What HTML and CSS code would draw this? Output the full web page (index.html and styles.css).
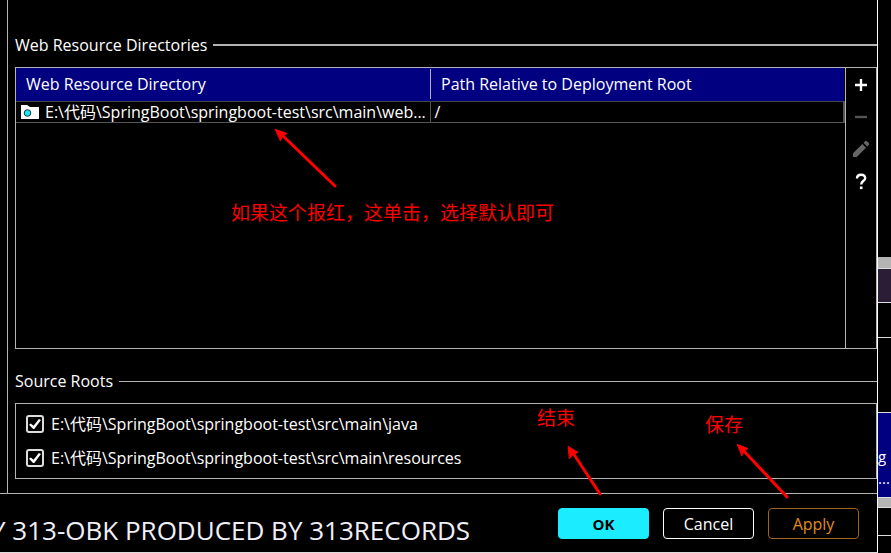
FILE: index.html
```html
<!DOCTYPE html>
<html lang="en">
<head>
<meta charset="utf-8">
<title>Web Resource Directories</title>
<link rel="stylesheet" href="styles.css">
</head>
<body>
<div class="screen">
  <div class="dialog">
    <main class="content">
      <h2 class="heading heading-strong">Web Resource Directories</h2>
      <section class="resources">
        <table class="table">
          <thead>
            <tr><th><span>Web Resource Directory</span></th><th><span>Path Relative to Deployment Root</span></th></tr>
          </thead>
          <tbody>
            <tr>
              <td>
                <div class="path">
                  <svg class="folder" width="18" height="14" viewBox="0 0 18 14" aria-hidden="true"><path d="M0 0h6l3 2h9v12H0z" fill="#fff"/><circle cx="6.500" cy="8" r="3.300" fill="#1ce6f5" stroke="#1b3338" stroke-width="1"/></svg>
                  <span>E:\代码\SpringBoot\springboot-test\src\main\web...</span>
                </div>
              </td>
              <td>/</td>
            </tr>
          </tbody>
        </table>
        <div class="tools">
          <button class="tool" type="button" aria-label="Add"><svg width="20" height="20" viewBox="0 0 20 20"><path d="M4 10h12M10 4v12" stroke="#fff" stroke-width="2.4"/></svg></button>
          <button class="tool" type="button" aria-label="Remove"><svg width="20" height="20" viewBox="0 0 20 20"><path d="M4 10h12" stroke="#555" stroke-width="2.4"/></svg></button>
          <button class="tool" type="button" aria-label="Edit"><svg width="20" height="20" viewBox="0 0 20 20"><path d="M2 18v-3.700L11.300 5l3.700 3.700L5.700 18zM12.500 3.800l1.600-1.600q.9-.7 1.800 0l1.900 1.900q.7.900 0 1.800l-1.600 1.600z" fill="#666"/></svg></button>
          <button class="tool" type="button" aria-label="Help"><svg width="20" height="20" viewBox="0 0 20 20"><path d="M6 7.500C6 4.800 7.700 3.700 10 3.700s4.200 1.300 4.200 3.500C14.200 9.700 10.200 10 10.200 13.500" fill="none" stroke="#fff" stroke-width="2.400"/><path d="M8.900 15.500h2.600v2.600H8.900z" fill="#fff"/></svg></button>
        </div>
      </section>
      <h2 class="heading">Source Roots</h2>
      <section class="roots">
        <label class="root"><input type="checkbox" checked><span>E:\代码\SpringBoot\springboot-test\src\main\java</span></label>
        <label class="root"><input type="checkbox" checked><span>E:\代码\SpringBoot\springboot-test\src\main\resources</span></label>
      </section>
    </main>
    <footer class="footer">
      <p class="credit">Y 313-OBK PRODUCED BY 313RECORDS</p>
      <div class="actions">
        <button class="button ok" type="button">OK</button>
        <button class="button cancel" type="button">Cancel</button>
        <button class="button apply" type="button">Apply</button>
      </div>
    </footer>
  </div>
  <aside class="behind">
    <div class="bar scroll-top"></div>
    <div class="bar plum"></div>
    <div class="bar empty"></div>
    <div class="bar gap"></div>
    <div class="bar selected"><span>g</span><span>...</span></div>
    <div class="bar scroll-bottom"></div>
    <div class="bar status"></div>
    <div class="bar last"></div>
  </aside>
  <svg class="arrows" width="891" height="553" viewBox="0 0 891 553" aria-hidden="true">
    <g stroke="#f00" stroke-width="3" stroke-linecap="round" fill="#f00">
      <path d="M335 186L282 135"/><path d="M275.500 129.500l11.500 4-4.500 2.500-2 4.500z" stroke-width="1"/>
      <path d="M600 494L573 453"/><path d="M568.500 446.500l9.500 6-5 1.500-3.500 4.500z" stroke-width="1"/>
      <path d="M787 497L743 450"/><path d="M737.500 444.500l10.500 4-4.500 2.500-1.500 4.500z" stroke-width="1"/>
    </g>
  </svg>
  <p class="note note-path">如果这个报红，这单击，选择默认即可</p>
  <p class="note note-ok">结束</p>
  <p class="note note-apply">保存</p>
</div>
</body>
</html>
```
FILE: styles.css
```css
* { box-sizing: border-box; }
body {
  margin: 0;
  background: #000;
  color: #fff;
  font: 16px/20px "Open Sans", "Noto Sans CJK SC", sans-serif;
}
p, h2 { margin: 0; }
button { font: inherit; cursor: pointer; }
.screen { position: relative; display: flex; min-height: 100vh; overflow: hidden; }
.dialog {
  flex: 1;
  min-width: 0;
  display: flex;
  flex-direction: column;
  border-right: 1px solid #fff;
  border-bottom: 1px solid #ddd;
}
.content {
  flex: 1;
  display: flex;
  flex-direction: column;
  margin-left: 7px;
  padding: 35px 0 14px 7px;
  border-left: 1px solid #b4b4b4;
}
.heading {
  display: flex;
  align-items: center;
  gap: 6px;
  font-size: 16px;
  font-weight: 400;
  line-height: 20px;
}
.heading::after { content: ""; flex: 1; height: 1px; background: #b4b4b4; }
.heading-strong::after { height: 2px; }
.resources {
  flex: 1;
  display: flex;
  margin: 12px 0 22px;
  border: 1px solid #b4b4b4;
}
.table {
  flex: 1;
  width: 100%;
  align-self: flex-start;
  table-layout: fixed;
  border-collapse: collapse;
}
.table th {
  height: 33px;
  padding: 0;
  background: #000080;
  border-bottom: 1px solid #444;
  font-weight: 400;
  text-align: left;
}
.table th span { display: block; padding: 5px 10px; }
.table th + th span { border-left: 1px solid #b4b4b4; }
.table td { height: 20px; padding: 0 4px; line-height: 20px; border-bottom: 1px solid #555; }
.table td + td { border-left: 1px solid #555; border-right: 2px solid #555; }
.path { display: flex; align-items: center; gap: 6px; height: 20px; padding-left: 1px; white-space: nowrap; }
.folder { flex: none; }
.tools {
  display: flex;
  flex: none;
  flex-direction: column;
  width: 31px;
  padding-top: 1px;
  border-left: 1px solid #b4b4b4;
}
.tool { display: grid; place-items: center; height: 32px; padding: 0; background: none; border: 0; }
.roots {
  display: flex;
  flex-direction: column;
  gap: 14px;
  margin-top: 12px;
  padding: 10px;
  border: 1px solid #b4b4b4;
}
.root { display: flex; align-items: center; gap: 7px; }
.root input {
  appearance: none;
  width: 18px;
  height: 18px;
  margin: 0;
  border: 2px solid #ddd;
  border-radius: 3px;
  display: grid;
  place-items: center;
}
.root input:checked::before {
  content: "";
  width: 12px;
  height: 10px;
  background: #fff;
  clip-path: polygon(0 58%, 15% 45%, 38% 68%, 82% 0, 100% 10%, 44% 100%, 34% 100%);
}
.footer {
  display: flex;
  align-items: center;
  justify-content: space-between;
  height: 59px;
  padding-right: 18px;
  border-top: 1px solid #b4b4b4;
}
.credit { margin: 14px 0 0 -9px; font-size: 26px; line-height: 32px; color: #f0f0f8; white-space: nowrap; }
.actions { display: flex; gap: 14px; }
.button { width: 91px; height: 31px; padding: 1px 0 0; border: 1px solid; border-radius: 4px; background: #000; }
.ok { background: #1cecff; border-color: #1cecff; color: #000; font-size: 15px; font-weight: 700; }
.cancel { border-color: #fff; color: #fff; }
.apply { border-color: #a06420; color: #e08a20; }
.behind { width: 13px; padding-top: 257px; overflow: hidden; }
.bar { border-bottom: 1px solid #ddd; }
.scroll-top { height: 12px; background: #b4b4b4; }
.plum { height: 34px; background: #2b1d35; }
.empty { height: 35px; }
.gap { height: 75px; }
.selected { display: flex; flex-direction: column; height: 85px; padding-top: 32px; background: #000080; line-height: 22px; }
.selected span { font-size: 15px; }
.scroll-bottom { height: 10px; background: #b4b4b4; }
.status { height: 28px; }
.last { border: 0; }
.arrows { position: absolute; left: 0; top: 0; pointer-events: none; }
.note { position: absolute; color: #f00; font: 19px/24px "Noto Sans CJK SC", sans-serif; white-space: nowrap; }
.note-path { left: 231px; top: 200px; }
.note-ok { left: 537px; top: 405px; }
.note-apply { left: 705px; top: 412px; }
```
